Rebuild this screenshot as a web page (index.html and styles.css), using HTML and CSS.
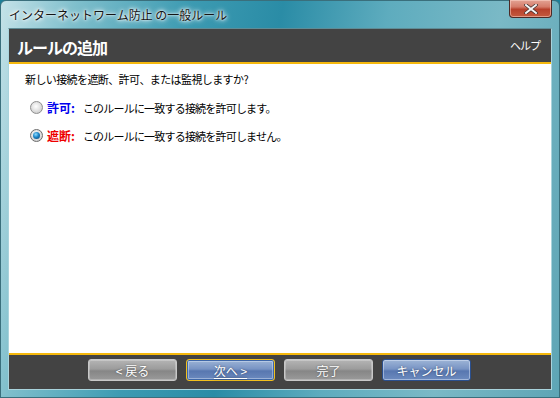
FILE: index.html
```html
<!DOCTYPE html>
<html lang="ja">
<head>
<meta charset="utf-8">
<title>インターネットワーム防止 の一般ルール</title>
<link rel="stylesheet" href="styles.css">
</head>
<body>
<div class="window">
  <div class="titlebar">
    <span class="title">インターネットワーム防止 の一般ルール</span>
    <button class="close" aria-label="閉じる">
      <svg width="14" height="10" viewBox="0 0 14 10"><path d="M2 1 L12 9 M12 1 L2 9" stroke="#3a2a28" stroke-width="3.4" stroke-linecap="square"/><path d="M2 1 L12 9 M12 1 L2 9" stroke="#f4f4f4" stroke-width="2" stroke-linecap="square"/></svg>
    </button>
  </div>
  <div class="panel">
    <div class="header">
      <h1 class="heading">ルールの追加</h1>
      <span class="help">ヘルプ</span>
    </div>
    <div class="content">
      <p class="question">新しい接続を遮断、許可、または監視しますか?</p>
      <label class="option">
        <span class="radio"></span>
        <span class="opt-name allow">許可:</span>
        <span class="opt-desc">このルールに一致する接続を許可します。</span>
      </label>
      <label class="option">
        <span class="radio checked"></span>
        <span class="opt-name block">遮断:</span>
        <span class="opt-desc">このルールに一致する接続を許可しません。</span>
      </label>
    </div>
    <div class="footer">
      <button class="btn gray">&lt; 戻る</button>
      <button class="btn blue focus"><u>次へ &gt;</u></button>
      <button class="btn gray">完了</button>
      <button class="btn blue">キャンセル</button>
    </div>
  </div>
</div>
</body>
</html>
```

FILE: styles.css
```css
html, body {
  margin: 0;
  padding: 0;
  background: #1c7f98;
}
body {
  font-family: "Noto Sans CJK JP", "Liberation Sans", sans-serif;
  font-size: 12px;
}
.window {
  width: 560px;
  height: 398px;
  box-sizing: border-box;
  display: flex;
  flex-direction: column;
  background: linear-gradient(100deg, #c4e2e8 0%, #7fbfcc 12%, #3d9bb2 30%, #2a8ca6 45%, #5eacbe 62%, #7ab9c6 80%, #5ea5b5 100%);
  border: 1px solid #3a6f7c;
  border-radius: 6px 6px 0 0;
  padding: 0 7px 7px 7px;
  position: relative;
}
.titlebar {
  height: 27px;
  display: flex;
  align-items: center;
  justify-content: space-between;
}
.title {
  color: #151515;
  font-size: 12px;
  padding-left: 1px;
  margin-top: -1px;
  text-shadow: 0 0 6px #ffffff, 0 0 4px #ffffff, 0 0 2px #ffffff;
}
.close {
  align-self: flex-start;
  width: 43px;
  height: 18px;
  margin: -1px 0 0 0;
  padding: 0;
  border: 1px solid #4c2a26;
  border-top: none;
  border-radius: 0 0 4px 4px;
  background: linear-gradient(#e3a394 0%, #d57c6a 40%, #b8412c 55%, #c45a3e 100%);
  box-shadow: inset 0 0 0 1px rgba(255,220,210,0.5);
  display: flex;
  align-items: center;
  justify-content: center;
}
.panel {
  flex: 1;
  display: flex;
  flex-direction: column;
  background: #434343;
  border: 1px solid #a9d3dc;
  border-top-color: #5f8c96;
  margin-bottom: 0;
  box-sizing: border-box;
}
.header {
  height: 33px;
  display: flex;
  align-items: center;
  justify-content: space-between;
  padding: 0 11px 0 8px;
  border-bottom: 2px solid #f5b80c;
}
.heading {
  margin: 0;
  color: #ffffff;
  font-size: 16px;
  font-weight: bold;
  letter-spacing: -1px;
  margin-top: 2px;
}
.help {
  color: #ffffff;
  font-size: 11px;
  letter-spacing: -1px;
  margin-top: -2px;
}
.content {
  flex: 1;
  background: #ffffff;
  padding: 7px 16px 0 16px;
  border-bottom: 2px solid #f5b80c;
  font-size: 11px;
}
.question {
  margin: 0 0 11px 0;
  color: #000000;
  line-height: 17px;
  letter-spacing: -0.6px;
}
.option {
  display: flex;
  align-items: center;
  height: 17px;
  margin: 0 0 11px 5px;
  color: #000000;
}
.radio {
  width: 11px;
  height: 11px;
  border-radius: 50%;
  border: 1px solid #8e8e8e;
  background: radial-gradient(circle at 45% 40%, #ffffff 0%, #e4e4e4 45%, #bdbdbd 100%);
  margin-right: 4px;
  position: relative;
}
.radio.checked {
  border-color: #6d6d6d;
}
.radio.checked::after {
  content: "";
  position: absolute;
  left: 2px;
  top: 2px;
  width: 7px;
  height: 7px;
  border-radius: 50%;
  background: radial-gradient(circle at 40% 35%, #8fdcff 0%, #1d86c8 45%, #0a3a66 100%);
}
.opt-name {
  font-weight: bold;
  font-size: 12px;
  margin-right: 8px;
}
.opt-desc {
  letter-spacing: -0.8px;
}
.allow { color: #0000ee; }
.block { color: #ee0000; }
.footer {
  height: 30px;
  display: flex;
  align-items: flex-start;
  padding: 4px 0 0 79px;
  gap: 9px;
}
.btn {
  width: 89px;
  height: 22px;
  box-sizing: border-box;
  border-radius: 3px;
  font-family: inherit;
  font-size: 12px;
  color: #ffffff;
  padding: 0;
  text-shadow: 0 0 2px rgba(0,0,0,0.5);
}
.btn u {
  text-decoration: underline;
  text-underline-offset: 2px;
}
.gray {
  border: 1px solid #c8c8c8;
  background: linear-gradient(#b4b4b4 0%, #9c9c9c 45%, #868686 55%, #9a9a9a 100%);
  box-shadow: inset 0 0 0 1px rgba(255,255,255,0.25);
}
.blue {
  border: 1px solid #2a4f8e;
  background: linear-gradient(#9db4d6 0%, #7894c4 45%, #5877b0 55%, #6d8bbf 100%);
  box-shadow: inset 0 0 0 1px rgba(230,240,255,0.45);
}
.blue.focus {
  border: 1px solid #f2c01c;
  box-shadow: inset 0 0 0 1px #3e67a8, inset 0 0 0 2px rgba(230,240,255,0.4);
}
```
